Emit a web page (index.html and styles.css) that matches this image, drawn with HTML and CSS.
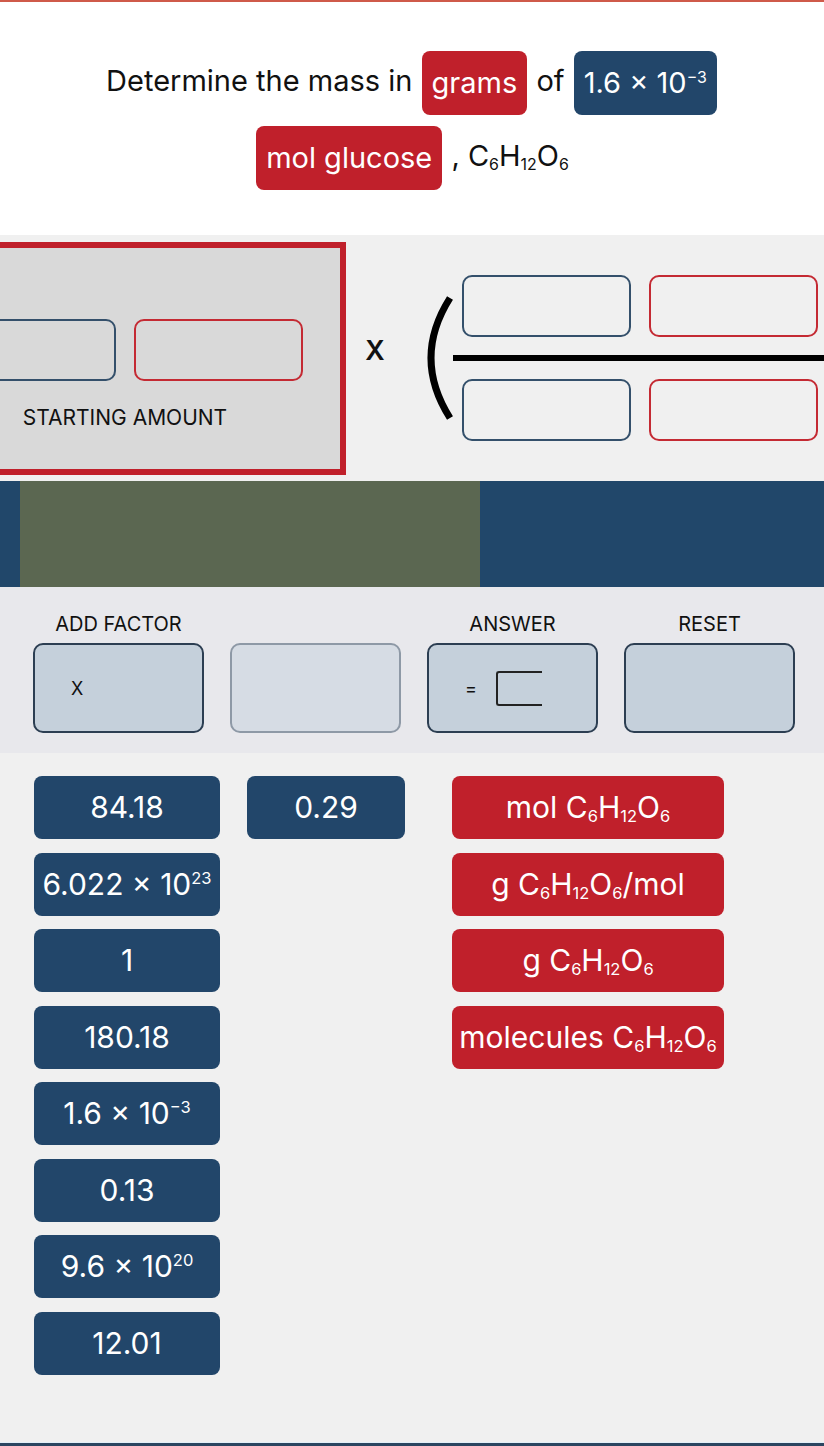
FILE: index.html
```html
<!DOCTYPE html>
<html lang="en">
<head>
    <meta charset="UTF-8">
    <meta name="viewport" content="width=device-width, initial-scale=1.0">
    <title>Dimensional Analysis</title>
    <link rel="stylesheet" href="styles.css">
</head>
<body>
    <div class="top-rule"></div>

    <!-- Question -->
    <header class="question">
        <p>Determine the mass in <span class="tag tag-red">grams</span> of <span class="tag tag-blue">1.6 × 10<sup>−3</sup></span><br><span class="tag tag-red">mol glucose</span> , C<sub>6</sub>H<sub>12</sub>O<sub>6</sub></p>
    </header>

    <!-- Work area: starting amount x (conversion factor) -->
    <section class="workspace">
        <div class="start-box">
            <div class="slot-row">
                <div class="slot slot-blue"></div>
                <div class="slot slot-red"></div>
            </div>
            <div class="start-label">STARTING AMOUNT</div>
        </div>
        <div class="times">X</div>
        <svg class="paren" width="30" height="130" viewBox="0 0 30 130">
            <path d="M 27 5 Q -11 65 27 125" fill="none" stroke="#000" stroke-width="7"/>
        </svg>
        <div class="fraction">
            <div class="slot-row">
                <div class="slot slot-blue"></div>
                <div class="slot slot-red"></div>
            </div>
            <div class="fraction-bar"></div>
            <div class="slot-row">
                <div class="slot slot-blue"></div>
                <div class="slot slot-red"></div>
            </div>
        </div>
    </section>

    <div class="progress">
        <div class="progress-fill"></div>
    </div>

    <!-- Controls -->
    <section class="controls">
        <div class="control">
            <div class="control-label">ADD FACTOR</div>
            <div class="control-btn"><span class="btn-x">X</span></div>
        </div>
        <div class="control">
            <div class="control-label">&nbsp;</div>
            <div class="control-btn control-btn-off"></div>
        </div>
        <div class="control">
            <div class="control-label">ANSWER</div>
            <div class="control-btn"><span class="btn-eq">=</span><span class="answer-bracket"></span></div>
        </div>
        <div class="control">
            <div class="control-label">RESET</div>
            <div class="control-btn"></div>
        </div>
    </section>

    <!-- Tiles to drag -->
    <section class="bank">
        <div class="bank-col col-values">
            <div class="chip chip-blue">84.18</div>
            <div class="chip chip-blue">6.022 × 10<sup>23</sup></div>
            <div class="chip chip-blue">1</div>
            <div class="chip chip-blue">180.18</div>
            <div class="chip chip-blue">1.6 × 10<sup>−3</sup></div>
            <div class="chip chip-blue">0.13</div>
            <div class="chip chip-blue">9.6 × 10<sup>20</sup></div>
            <div class="chip chip-blue">12.01</div>
        </div>
        <div class="bank-col col-extra">
            <div class="chip chip-blue">0.29</div>
        </div>
        <div class="bank-col col-units">
            <div class="chip chip-red">mol C<sub>6</sub>H<sub>12</sub>O<sub>6</sub></div>
            <div class="chip chip-red">g C<sub>6</sub>H<sub>12</sub>O<sub>6</sub>/mol</div>
            <div class="chip chip-red">g C<sub>6</sub>H<sub>12</sub>O<sub>6</sub></div>
            <div class="chip chip-red">molecules C<sub>6</sub>H<sub>12</sub>O<sub>6</sub></div>
        </div>
    </section>

    <div class="bottom-rule"></div>
</body>
</html>
```

FILE: styles.css
```css
body {
    font-family: Inter, "Liberation Sans", sans-serif;
    margin: 0;
    height: 100vh;
    display: flex;
    flex-direction: column;
    overflow: hidden;
    color: #111;
    background-color: #f0f0f0;
}
sup, sub {
    font-size: 0.55em;
    line-height: 0;
}
sup {
    vertical-align: 0.65em;
}
sub {
    vertical-align: -0.25em;
}

.top-rule {
    height: 2px;
    background-color: #cf5a4a;
}

/* Question */
.question {
    background-color: #fff;
    height: 233px;
    box-sizing: border-box;
    padding-top: 41px;
    text-align: center;
}
.question p {
    margin: 0;
    font-size: 29px;
    line-height: 75px;
}
.tag {
    display: inline-block;
    height: 64px;
    line-height: 64px;
    padding: 0 10px;
    margin: 0 1px;
    border-radius: 8px;
    color: #fff;
    vertical-align: middle;
}
.tag-red {
    background-color: #c0202b;
}
.tag-blue {
    background-color: #22466a;
}

/* Work area */
.workspace {
    height: 246px;
    display: flex;
    align-items: center;
    overflow: hidden;
    background-color: #f0f0f0;
}
.start-box {
    flex-shrink: 0;
    width: 442px;
    height: 233px;
    margin-left: -96px;
    box-sizing: border-box;
    border: 6px solid #c0202b;
    background-color: #d9d9d9;
    padding-top: 71px;
    display: flex;
    flex-direction: column;
    align-items: center;
}
.slot-row {
    display: flex;
    gap: 18px;
}
.slot {
    width: 169px;
    height: 62px;
    box-sizing: border-box;
    border-radius: 10px;
    border: 2px solid #34506b;
}
.slot-red {
    border-color: #c42a33;
}
.start-label {
    margin-top: 25px;
    font-size: 21px;
    line-height: 24px;
}
.times {
    flex-shrink: 0;
    width: 22px;
    margin-left: 18px;
    margin-bottom: 16px;
    text-align: center;
    font-size: 27px;
    font-weight: 600;
}
.paren {
    flex-shrink: 0;
    margin-left: 37px;
}
.fraction {
    flex-shrink: 0;
    display: flex;
    flex-direction: column;
}
.fraction .slot-row {
    padding-left: 9px;
}
.fraction-bar {
    width: 400px;
    height: 6px;
    margin: 18px 0;
    background-color: #000;
}

.progress {
    height: 106px;
    background-color: #21476a;
    padding-left: 20px;
}
.progress-fill {
    width: 460px;
    height: 100%;
    background-color: #5b6751;
}

/* Controls */
.controls {
    background-color: #e8e8ec;
    display: grid;
    grid-template-columns: repeat(4, 171px);
    column-gap: 26px;
    padding: 25px 0 20px 33px;
}
.control-label {
    text-align: center;
    font-size: 20px;
    line-height: 24px;
    margin-bottom: 7px;
}
.control-btn {
    height: 90px;
    box-sizing: border-box;
    border: 2px solid #2c3e52;
    border-radius: 10px;
    background-color: #c5d0db;
    display: flex;
    align-items: center;
    padding-left: 36px;
}
.control-btn-off {
    background-color: #d6dce4;
    border-color: #8e99a6;
}
.btn-x {
    font-size: 18px;
}
.btn-eq {
    font-size: 18px;
}
.answer-bracket {
    width: 46px;
    height: 35px;
    margin-left: 19px;
    box-sizing: border-box;
    border: 2px solid #222;
    border-right: none;
    border-radius: 3px 0 0 3px;
}

/* Tiles */
.bank {
    flex: 1;
    display: flex;
    align-items: flex-start;
    padding: 23px 0 0 34px;
    background-color: #f0f0f0;
}
.bank-col {
    display: flex;
    flex-direction: column;
    gap: 13.5px;
}
.col-values {
    width: 186px;
}
.col-extra {
    width: 158px;
    margin-left: 27px;
}
.col-units {
    width: 272px;
    margin-left: 47px;
}
.chip {
    height: 63px;
    line-height: 63px;
    border-radius: 8px;
    color: #fff;
    font-size: 30px;
    text-align: center;
    white-space: nowrap;
    overflow: hidden;
}
.chip-blue {
    background-color: #22466a;
}
.chip-red {
    background-color: #c0202b;
}

.bottom-rule {
    height: 4px;
    border-top: 1px solid #e3eff8;
    box-sizing: border-box;
    background-color: #2b4560;
}
```
